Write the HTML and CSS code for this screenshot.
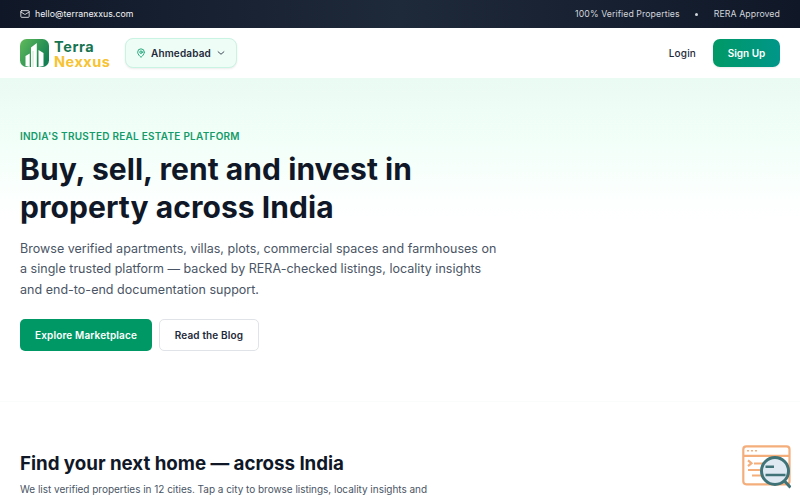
FILE: index.html
```html
<!DOCTYPE html>
<html lang="en">
<head>
    <meta charset="UTF-8">
    <title>Terra Nexxus</title>
    <link rel="stylesheet" href="styles.css">
</head>
<body>
    <div class="topbar">
        <a class="mail">
            <svg class="icon-mail" viewBox="0 0 24 24"><rect x="2" y="4" width="20" height="16" rx="2"/><path d="m22 7-8.97 5.7a1.94 1.94 0 0 1-2.06 0L2 7"/></svg>
            <span>hello@terranexxus.com</span>
        </a>
        <div class="badges">
            <span class="verified">100% Verified Properties</span>
            <i class="dot"></i>
            <span class="rera">RERA Approved</span>
        </div>
    </div>

    <header class="navbar">
        <a class="logo">
            <svg class="logo-mark" viewBox="0 0 29 28">
                <defs>
                    <linearGradient id="leaf" x1="0" y1="0" x2="1" y2="0.6">
                        <stop offset="0" stop-color="#62bb5a"/>
                        <stop offset="1" stop-color="#128052"/>
                    </linearGradient>
                </defs>
                <rect width="29" height="28" rx="6.5" fill="url(#leaf)"/>
                <path d="M5.500 27V17l4.200-2.600V28zM11 28V8.500l5.800-4.500v24zM18.500 28V11l5 3v13z" fill="#fff"/>
                <path d="M13 12v16" stroke="#8fcb96" stroke-width=".5"/>
            </svg>
            <span class="logo-text"><span class="terra">Terra</span><span class="nexxus">Nexxus</span></span>
        </a>
        <button class="city">
            <svg class="icon-pin" viewBox="0 0 24 24"><path d="M20 10c0 5-5.5 10.2-7.4 11.8a1 1 0 0 1-1.2 0C9.500 20.200 4 15 4 10a8 8 0 0 1 16 0"/><circle cx="12" cy="10" r="3"/></svg>
            <span>Ahmedabad</span>
            <svg class="icon-chevron" viewBox="0 0 24 24"><path d="m5 9 7 6 7-6"/></svg>
        </button>
        <nav class="account">
            <a class="login">Login</a>
            <a class="signup">Sign Up</a>
        </nav>
    </header>

    <section class="hero">
        <p class="eyebrow">INDIA'S TRUSTED REAL ESTATE PLATFORM</p>
        <h1>Buy, sell, rent and invest in<br>property across India</h1>
        <p class="lead">Browse verified apartments, villas, plots, commercial spaces and farmhouses on<br>a single trusted platform — backed by RERA-checked listings, locality insights<br>and end-to-end documentation support.</p>
        <div class="actions">
            <a class="btn primary">Explore Marketplace</a>
            <a class="btn outline">Read the Blog</a>
        </div>
    </section>

    <section class="cities">
        <h2>Find your next home — across India</h2>
        <p>We list verified properties in 12 cities. Tap a city to browse listings, locality insights and</p>
    </section>

    <div class="inspect">
        <svg viewBox="0 0 50 44">
            <g fill="none" stroke="#f4ae7b" stroke-width="2.200">
                <rect x="2.300" y="1.300" width="46.200" height="38" rx="3"/>
                <path d="M2 10.800h46M7 15.300l3.500 2.900L7 21.200M13 18.500h9M7 25h12M11 30.500h9"/>
                <path d="M6 5.700h2M10 5.700h2M14 5.700h2" stroke-width="1.500"/>
            </g>
            <circle cx="34" cy="26" r="13.500" fill="#dfe9f2" stroke="#3f7377" stroke-width="3"/>
            <path d="M24.500 21.700h8.500M24.500 30h20" stroke="#3f7377" stroke-width="2.400"/>
            <path d="M43.500 36l6 6.500" stroke="#3f7377" stroke-width="3"/>
        </svg>
    </div>
</body>
</html>
```

FILE: styles.css
```css
* {
    box-sizing: border-box;
}

body {
    margin: 0;
    height: 500px;
    overflow: hidden;
    font-family: Inter, "Liberation Sans", sans-serif;
    color: #101828;
    background: #fff;
}

h1, h2, p {
    margin: 0;
}

.topbar {
    display: flex;
    justify-content: space-between;
    align-items: center;
    height: 28px;
    padding: 0 20px;
    font-size: 8.75px;
    color: #d1d5dc;
    background: linear-gradient(90deg, #101828, #1e2939 50%, #101828);
}

.mail,
.badges {
    display: flex;
    align-items: center;
}

.mail {
    gap: 5px;
    color: #f3f4f6;
    letter-spacing: 0.04px;
}

.badges {
    gap: 15.5px;
    letter-spacing: 0.08px;
}

.dot {
    width: 3px;
    height: 3px;
    border-radius: 50%;
    background: #d1d5dc;
}

svg {
    display: block;
}

.icon-mail,
.icon-pin,
.icon-chevron {
    width: 10px;
    height: 10px;
    fill: none;
    stroke: currentColor;
    stroke-width: 2;
    stroke-linecap: round;
    stroke-linejoin: round;
}

.navbar {
    display: flex;
    align-items: center;
    height: 50px;
    padding: 0 20px;
    background: #fff;
}

.logo {
    display: flex;
    align-items: center;
    gap: 5px;
    width: 105px;
}

.logo-mark {
    width: 29px;
    height: 28px;
}

.logo-text {
    display: flex;
    flex-direction: column;
    padding-top: 1px;
    font-size: 14.5px;
    font-weight: 700;
    line-height: 15px;
}

.terra {
    color: #167451;
    letter-spacing: 0.6px;
}

.nexxus {
    color: #f7c332;
    letter-spacing: 0.5px;
}

.city {
    display: flex;
    align-items: center;
    gap: 5px;
    width: 112px;
    height: 30px;
    padding: 0 10px;
    border: 1px solid #c9f3e2;
    border-radius: 8px;
    font: 600 10px Inter, sans-serif;
    letter-spacing: 0.15px;
    color: #1e2939;
    background: #effdf7;
    box-shadow: 0 1px 2px rgba(0, 0, 0, 0.08);
}

.icon-pin {
    color: #009966;
}

.account {
    display: flex;
    align-items: center;
    gap: 17px;
    margin-left: auto;
    font-size: 10px;
    font-weight: 500;
    letter-spacing: 0.15px;
    color: #1e2939;
}

.signup {
    width: 67px;
    height: 28px;
    border-radius: 7px;
    line-height: 28px;
    text-align: center;
    font-weight: 600;
    letter-spacing: 0;
    color: #fff;
    background: linear-gradient(90deg, #009966, #009689);
    box-shadow: 0 1px 2px rgba(0, 0, 0, 0.08);
}

.hero {
    height: 324px;
    padding: 50px 20px 0;
    border-bottom: 1px solid #fafbfb;
    background: linear-gradient(#eafbf3, #f2fff9 20%, #fbfffd 36%, #fff 44%);
}

.eyebrow {
    font-size: 10px;
    line-height: 16px;
    font-weight: 600;
    letter-spacing: 0.25px;
    color: #149b69;
}

h1 {
    margin-top: 7px;
    font-size: 30px;
    line-height: 37.5px;
    font-weight: 700;
    letter-spacing: 0.06px;
}

.lead {
    margin-top: 13px;
    font-size: 12.5px;
    line-height: 20.3px;
    letter-spacing: 0.025px;
    color: #4a5565;
}

.actions {
    display: flex;
    gap: 7px;
    margin-top: 19px;
}

.btn {
    height: 32px;
    border-radius: 5px;
    font-size: 10px;
    line-height: 32px;
    font-weight: 600;
    letter-spacing: 0.14px;
    text-align: center;
}

.primary {
    width: 132px;
    color: #fff;
    background: #009966;
}

.outline {
    width: 100px;
    border: 1px solid #e0e3e7;
    line-height: 30px;
    color: #1e2939;
}

.cities {
    padding: 48px 20px 0;
}

h2 {
    font-size: 18.75px;
    line-height: 27px;
    font-weight: 700;
    letter-spacing: -0.03px;
}

.cities p {
    margin-top: 5px;
    font-size: 10px;
    line-height: 15px;
    letter-spacing: -0.025px;
    color: #4a5565;
}

/* floating inspector badge */
.inspect {
    position: absolute;
    right: 9px;
    bottom: 11px;
    width: 50px;
    height: 44px;
}
```
